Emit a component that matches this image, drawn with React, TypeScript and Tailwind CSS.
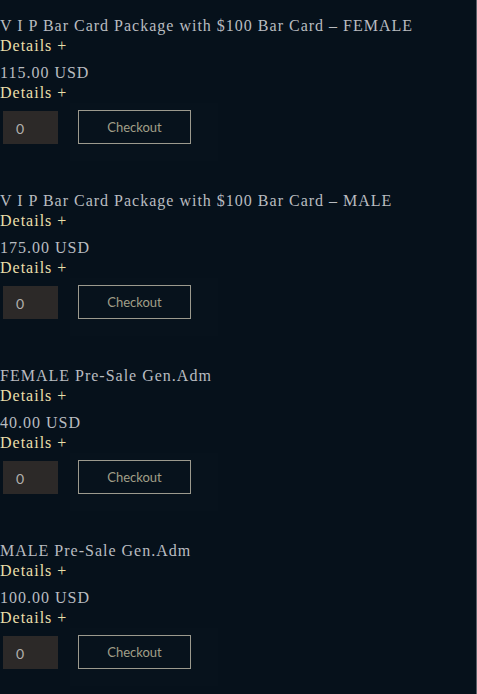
import React from "react";

interface Ticket {
  name: string;
  price: string;
}

const tickets: Ticket[] = [
  { name: "V I P Bar Card Package with $100 Bar Card – FEMALE", price: "115.00 USD" },
  { name: "V I P Bar Card Package with $100 Bar Card – MALE", price: "175.00 USD" },
  { name: "FEMALE Pre-Sale Gen.Adm", price: "40.00 USD" },
  { name: "MALE Pre-Sale Gen.Adm", price: "100.00 USD" },
];

function TicketRow({ ticket }: { ticket: Ticket }) {
  return (
    <div className="pt-[16px] pb-[14px]">
      <div className="h-[20px] leading-[20px] text-[16px] tracking-[1px] text-[#b9bcc0] whitespace-nowrap">
        {ticket.name}
      </div>
      <div className="h-[20px] leading-[20px] text-[16px] tracking-[1px] text-[#eadfaa]">Details +</div>
      <div className="mt-[7px] h-[20px] leading-[20px] text-[16px] tracking-[1px] text-[#b9bcc0]">
        {ticket.price}
      </div>
      <div className="h-[20px] leading-[20px] text-[16px] tracking-[1px] text-[#eadfaa]">Details +</div>
      <div className="flex items-start">
        <div className="mt-[8px] ml-[3px] w-[55px] h-[33px] bg-[#2c2928] flex items-center pl-[13px] pt-[1px] text-[14px] text-[#b3b0ad] font-['Lato',sans-serif]">
          0
        </div>
        <div className="ml-[12px] w-[148px] h-[58px] bg-[#07121c] pl-[8px] pt-[7px]">
          <button className="w-[113px] h-[34px] border border-[#9c9a8e] pt-[2px] text-[13px] text-[#a19f88] font-['Lato',sans-serif]">
            Checkout
          </button>
        </div>
      </div>
    </div>
  );
}

export default function App() {
  return (
    <div className="w-[477px] h-[694px] overflow-hidden bg-[#06111b] border-r border-[#5b6068] font-['Liberation_Serif',serif]">
      {tickets.map((t) => (
        <TicketRow key={t.name} ticket={t} />
      ))}
    </div>
  );
}
